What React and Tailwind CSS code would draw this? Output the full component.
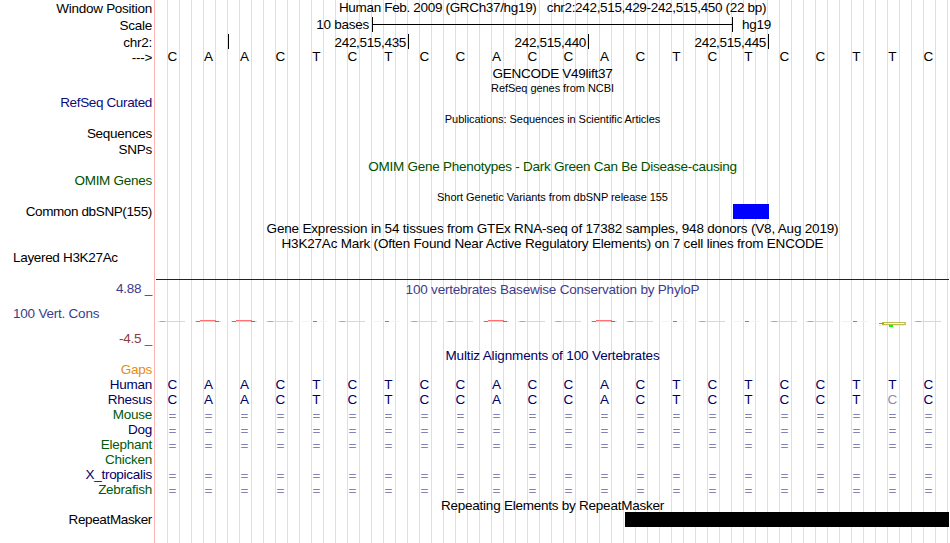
import clsx from "clsx";

const SEQUENCE = "CAACTCTCCACCACTCTCCTTC".split("");
const RHESUS = "CAACTCTCCACCACTCTCCTCC".split("");
const GAP = SEQUENCE.map(() => "=");

// Track labels in the left column; "gap" is the space above each one
const LABELS = [
  { text: "Window Position", gap: "mt-px" },
  { text: "Scale", gap: "mt-0.5" },
  { text: "chr2:", gap: "mt-0.5" },
  { text: "--->" },
  { text: "RefSeq Curated", gap: "mt-[30px]", color: "text-[#0c0c78]", tracking: "tracking-[-0.36px]" },
  { text: "Sequences", gap: "mt-4" },
  { text: "SNPs", gap: "mt-px" },
  { text: "OMIM Genes", gap: "mt-4", color: "text-[#005000]" },
  { text: "Common dbSNP(155)", gap: "mt-4", tracking: "tracking-[-0.38px]" },
  { text: "Layered H3K27Ac", gap: "mt-[31px]", left: true, tracking: "tracking-[-0.32px]" },
  { text: "4.88 _", gap: "mt-4", color: "text-[#3c3c8c]" },
  { text: "100 Vert. Cons", gap: "mt-2.5", color: "text-[#3c3c8c]", left: true, tracking: "tracking-[-0.22px]" },
  { text: "-4.5 _", gap: "mt-2.5", color: "text-[#8c3c3c]" },
  { text: "Gaps", gap: "mt-4", color: "text-[#e68c14]" },
  { text: "Human", color: "text-[#000064]" },
  { text: "Rhesus", color: "text-[#000064]" },
  { text: "Mouse", color: "text-[#005a0a]" },
  { text: "Dog", color: "text-[#000064]" },
  { text: "Elephant", color: "text-[#005a0a]" },
  { text: "Chicken", color: "text-[#005a0a]" },
  { text: "X_tropicalis", color: "text-[#000064]" },
  { text: "Zebrafish", color: "text-[#005a0a]" },
  { text: "RepeatMasker", gap: "mt-[15px]", tracking: "tracking-[-0.36px]" },
];

function Title({ children, className, small }) {
  return (
    <h2
      className={clsx(
        "h-[15px] pl-px text-center whitespace-pre",
        small && "text-[11px] tracking-[-0.05px]",
        className
      )}
    >
      {children}
    </h2>
  );
}

function Bases({ bases, className, mismatch }) {
  return (
    <div className={clsx("flex h-[15px] -ml-[0.7px]", className)}>
      {bases.map((base, i) => (
        <span
          key={i}
          className={clsx("w-9 shrink-0 text-center", i === mismatch && "text-[#8c8cb4]")}
        >
          {base}
        </span>
      ))}
    </div>
  );
}

// PhyloP logo letters, squashed to almost nothing because the scores are near zero
function Conservation() {
  return (
    <svg width="794" height="12" viewBox="0 0 794 12" className="block mt-[19px]" shapeRendering="crispEdges">
      {SEQUENCE.map((base, i) => {
        const x = 3 + i * 36;
        if (i === 20) {
          return (
            <g key={i}>
              <rect x={x + 4} y="6" width="24" height="1" fill="#bebe50" />
              <rect x={x + 1} y="7" width="5" height="1" fill="#a0a000" />
              <rect x={x + 26} y="7" width="2" height="1" fill="#d8d890" />
              <rect x={x + 4} y="8" width="24" height="1" fill="#bebe50" />
              <rect x={x} y="9" width="27" height="1" fill="#d8f8d8" />
              <rect x={x + 11} y="9" width="4" height="2" fill="#00ff00" />
            </g>
          );
        }
        if (base === "A") {
          return (
            <g key={i}>
              <rect x={x + 1} y="5" width="26" height="1" fill="#ffc8c8" />
              <rect x={x + 2} y="5" width="4" height="1" fill="#ff5050" />
              <rect x={x + 21} y="5" width="4" height="1" fill="#ff4040" />
              <rect x={x + 6} y="4" width="16" height="1" fill="#ff7070" />
            </g>
          );
        }
        if (base === "T") {
          return (
            <g key={i}>
              <rect x={x} y="5" width="26" height="1" fill="#e8fae8" />
              <rect x={x + 11} y="5" width="4" height="1" fill="#00e600" />
            </g>
          );
        }
        return (
          <g key={i}>
            <rect x={x} y="5" width="27" height="1" fill="#dcdcb4" />
            <rect x={x + 2} y="5" width="5" height="1" fill="#b4b450" />
          </g>
        );
      })}
    </svg>
  );
}

export default function App() {
  return (
    <main className="flex w-[950px] h-[543px] overflow-hidden bg-white text-black text-[13.5px] leading-[15px] tracking-[-0.27px] font-['Liberation_Sans',Arial,sans-serif]">
      {/* ============ TRACK LABELS ============ */}
      <aside className="flex flex-col w-[154px] shrink-0 pr-0.5 pl-[13px]">
        {LABELS.map((label) => (
          <div
            key={label.text}
            className={clsx(
              "h-[15px] whitespace-nowrap",
              label.left ? "text-left" : "text-right",
              label.gap,
              label.color,
              label.tracking
            )}
          >
            {label.text}
          </div>
        ))}
      </aside>

      {/* ============ TRACK IMAGE ============ */}
      <section className="flex flex-col w-[795px] shrink-0 border-l border-[#ffb4b4] bg-[linear-gradient(#fff,#fff),linear-gradient(to_right,#dcdcf5_1px,transparent_1px)] [background-size:12px_100%,12px_100%] [background-repeat:no-repeat,repeat]">
        <Title className="tracking-[-0.33px]">Human Feb. 2009 (GRCh37/hg19)   chr2:242,515,429-242,515,450 (22 bp)</Title>

        {/* Scale bar */}
        <div className="flex h-[15px] mt-0.5">
          <span className="w-[217px] pr-[3px] text-right">10 bases</span>
          <div className="flex items-center w-[361px] border-x border-black">
            <div className="w-full h-px bg-black" />
          </div>
          <span className="pl-[9px]">hg19</span>
        </div>

        {/* Coordinates */}
        <div className="flex h-[15px] mt-0.5 leading-[17px] tracking-[-0.33px] text-right">
          <div className="w-[74px] border-r border-black" />
          {["242,515,435", "242,515,440", "242,515,445"].map((position) => (
            <div key={position} className="w-[180px] pr-0.5 border-r border-black">
              {position}
            </div>
          ))}
        </div>

        <Bases bases={SEQUENCE} />

        <Title className="mt-0.5">GENCODE V49lift37</Title>
        <Title small>RefSeq genes from NCBI</Title>
        <Title small className="mt-4">Publications: Sequences in Scientific Articles</Title>
        <Title className="mt-8 tracking-[-0.25px] text-[#005000]">
          OMIM Gene Phenotypes - Dark Green Can Be Disease-causing
        </Title>
        <Title small className="mt-4">Short Genetic Variants from dbSNP release 155</Title>
        <div className="w-9 h-[15px] -mt-px ml-[578px] bg-[#0000ff]" />
        <Title className="mt-0.5 tracking-[-0.19px]">
          Gene Expression in 54 tissues from GTEx RNA-seq of 17382 samples, 948 donors (V8, Aug 2019)
        </Title>
        <Title className="tracking-[-0.19px]">
          H3K27Ac Mark (Often Found Near Active Regulatory Elements) on 7 cell lines from ENCODE
        </Title>
        <div className="h-px mt-7 ml-px bg-[#281e28]" />

        {/* Conservation */}
        <Title className="mt-0.5 tracking-[-0.2px] text-[#3c3c8c]">100 vertebrates Basewise Conservation by PhyloP</Title>
        <Conservation />

        {/* Alignments */}
        <Title className="mt-5 tracking-[-0.14px] text-[#000064]">Multiz Alignments of 100 Vertebrates</Title>
        <div className="mt-3.5 text-[#000064]">
          <Bases bases={SEQUENCE} />
          <Bases bases={RHESUS} mismatch={20} />
          <div className="leading-[17px] text-[#8282b4]">
            <Bases bases={GAP} />
            <Bases bases={GAP} />
            <Bases bases={GAP} />
            <Bases bases={GAP} className="mt-[15px]" />
            <Bases bases={GAP} />
          </div>
        </div>

        {/* Repeats */}
        <Title className="mt-px tracking-[-0.24px]">Repeating Elements by RepeatMasker</Title>
        <div className="h-[15px] -mt-px ml-[470px] bg-black" />
      </section>
    </main>
  );
}
